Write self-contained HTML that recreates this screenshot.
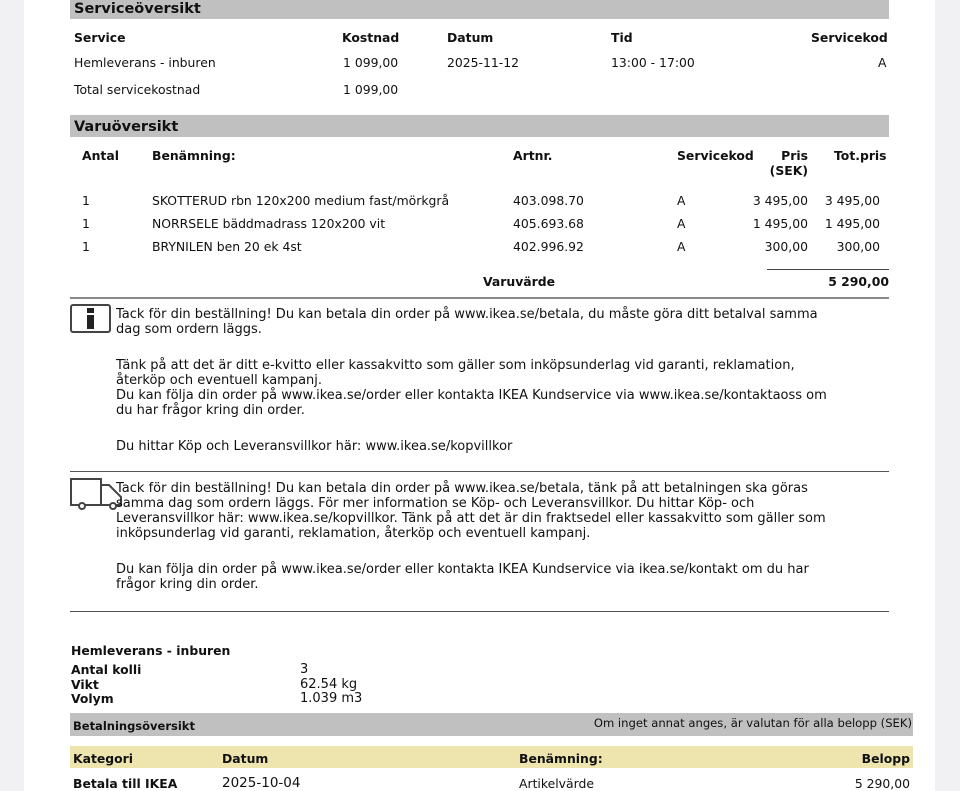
<!DOCTYPE html>
<html><head><meta charset="utf-8"><style>
body{margin:0;width:960px;height:791px;background:#f1f1f4;overflow:hidden;font-family:"DejaVu Sans","Liberation Sans",sans-serif;font-size:12.4px;color:#111;position:relative}
.paper{position:absolute;left:24px;top:0;width:911px;height:791px;background:#fff}
.t{position:absolute;white-space:nowrap;line-height:15px;margin-top:1px}
.p{font-size:13px}
.b{font-weight:bold}
.r{text-align:right}
.bar{position:absolute;background:#c0c0c0}
.hl{position:absolute;height:2px;background:#888}
</style></head><body>
<div class="paper"></div>
<div class="bar" style="left:70px;top:0;width:819px;height:19px"></div>
<div class="t b" style="left:74px;top:-1px;font-size:14.5px;line-height:18px">Serviceöversikt</div>
<div class="t b" style="left:74px;top:29px">Service</div>
<div class="t b" style="left:342px;top:29px">Kostnad</div>
<div class="t b" style="left:447px;top:29px">Datum</div>
<div class="t b" style="left:611px;top:29px">Tid</div>
<div class="t b" style="left:811px;top:29px">Servicekod</div>
<div class="t" style="left:74px;top:54px">Hemleverans - inburen</div>
<div class="t" style="left:343px;top:54px">1 099,00</div>
<div class="t" style="left:447px;top:54px">2025-11-12</div>
<div class="t" style="left:611px;top:54px">13:00 - 17:00</div>
<div class="t" style="left:878px;top:54px">A</div>
<div class="t" style="left:74px;top:81px">Total servicekostnad</div>
<div class="t" style="left:343px;top:81px">1 099,00</div>

<div class="bar" style="left:70px;top:115px;width:819px;height:22px"></div>
<div class="t b" style="left:74px;top:117px;font-size:14.5px;line-height:18px">Varuöversikt</div>
<div class="t b" style="left:82px;top:147px">Antal</div>
<div class="t b" style="left:152px;top:147px">Benämning:</div>
<div class="t b" style="left:513px;top:147px">Artnr.</div>
<div class="t b" style="left:677px;top:147px">Servicekod</div>
<div class="t b r" style="left:760px;top:147px;width:48px">Pris<br>(SEK)</div>
<div class="t b" style="left:834px;top:147px">Tot.pris</div>
<div class="t" style="left:82px;top:192px">1</div><div class="t" style="left:152px;top:192px">SKOTTERUD rbn 120x200 medium fast/mörkgrå</div><div class="t" style="left:513px;top:192px">403.098.70</div><div class="t" style="left:677px;top:192px">A</div><div class="t r" style="left:720px;top:192px;width:88px">3 495,00</div><div class="t r" style="left:800px;top:192px;width:80px">3 495,00</div>
<div class="t" style="left:82px;top:215px">1</div><div class="t" style="left:152px;top:215px">NORRSELE bäddmadrass 120x200 vit</div><div class="t" style="left:513px;top:215px">405.693.68</div><div class="t" style="left:677px;top:215px">A</div><div class="t r" style="left:720px;top:215px;width:88px">1 495,00</div><div class="t r" style="left:800px;top:215px;width:80px">1 495,00</div>
<div class="t" style="left:82px;top:238px">1</div><div class="t" style="left:152px;top:238px">BRYNILEN ben 20 ek 4st</div><div class="t" style="left:513px;top:238px">402.996.92</div><div class="t" style="left:677px;top:238px">A</div><div class="t r" style="left:720px;top:238px;width:88px">300,00</div><div class="t r" style="left:800px;top:238px;width:80px">300,00</div>
<div style="position:absolute;left:767px;top:269px;width:122px;height:1px;background:#444"></div>
<div class="t b" style="left:483px;top:273px">Varuvärde</div>
<div class="t b r" style="left:780px;top:273px;width:109px">5 290,00</div>
<div class="hl" style="left:70px;top:297px;width:819px"></div>

<div style="position:absolute;left:70px;top:304px;width:41px;height:29px;border:2px solid #444;border-radius:3px;box-sizing:border-box"></div>
<div style="position:absolute;left:87px;top:308px;width:7px;height:5px;background:#222"></div>
<div style="position:absolute;left:87px;top:315px;width:7px;height:14px;background:#222"></div>
<div class="t p" style="left:116px;top:306px">Tack för din beställning! Du kan betala din order på www.ikea.se/betala, du måste göra ditt betalval samma<br>dag som ordern läggs.</div>
<div class="t p" style="left:116px;top:357px">Tänk på att det är ditt e-kvitto eller kassakvitto som gäller som inköpsunderlag vid garanti, reklamation,<br>återköp och eventuell kampanj.<br>Du kan följa din order på www.ikea.se/order eller kontakta IKEA Kundservice via www.ikea.se/kontaktaoss om<br>du har frågor kring din order.</div>
<div class="t p" style="left:116px;top:438px">Du hittar Köp och Leveransvillkor här: www.ikea.se/kopvillkor</div>
<div class="hl" style="left:70px;top:471px;width:819px;height:1px;background:#555"></div>

<svg style="position:absolute;left:69px;top:477px" width="56" height="36" viewBox="0 0 56 36" fill="none" stroke="#444" stroke-width="2"><path d="M2 2H32V28H2Z"/><path d="M32 8H40L52 20V28H32"/><circle cx="13" cy="29" r="3" fill="#fff"/><circle cx="44" cy="29" r="3" fill="#fff"/></svg>
<div class="t p" style="left:116px;top:480px">Tack för din beställning! Du kan betala din order på www.ikea.se/betala, tänk på att betalningen ska göras<br>samma dag som ordern läggs. För mer information se Köp- och Leveransvillkor. Du hittar Köp- och<br>Leveransvillkor här: www.ikea.se/kopvillkor. Tänk på att det är din fraktsedel eller kassakvitto som gäller som<br>inköpsunderlag vid garanti, reklamation, återköp och eventuell kampanj.</div>
<div class="t p" style="left:116px;top:561px">Du kan följa din order på www.ikea.se/order eller kontakta IKEA Kundservice via ikea.se/kontakt om du har<br>frågor kring din order.</div>
<div class="hl" style="left:70px;top:611px;width:819px;height:1px;background:#555"></div>

<div class="t b" style="left:71px;top:642px">Hemleverans - inburen</div>
<div class="t b" style="left:71px;top:662px;line-height:14.5px">Antal kolli<br>Vikt<br>Volym</div>
<div class="t p" style="left:300px;top:662px;line-height:14.5px">3<br>62.54 kg<br>1.039 m3</div>
<div class="bar" style="left:70px;top:713px;width:843px;height:23px"></div>
<div class="t b" style="left:73px;top:718px;font-size:11.5px">Betalningsöversikt</div>
<div class="t" style="left:560px;top:715px;width:352px;text-align:right;font-size:11.6px">Om inget annat anges, är valutan för alla belopp (SEK)</div>
<div style="position:absolute;left:70px;top:746px;width:843px;height:22px;background:#ede4ae"></div>
<div class="t b" style="left:73px;top:750px">Kategori</div>
<div class="t b" style="left:222px;top:750px">Datum</div>
<div class="t b" style="left:519px;top:750px">Benämning:</div>
<div class="t b r" style="left:800px;top:750px;width:110px">Belopp</div>
<div class="t b" style="left:73px;top:775px">Betala till IKEA</div>
<div class="t" style="left:222px;top:775px;font-size:13.5px">2025-10-04</div>
<div class="t" style="left:519px;top:775px">Artikelvärde</div>
<div class="t r" style="left:800px;top:775px;width:110px">5 290,00</div>
</body></html>
